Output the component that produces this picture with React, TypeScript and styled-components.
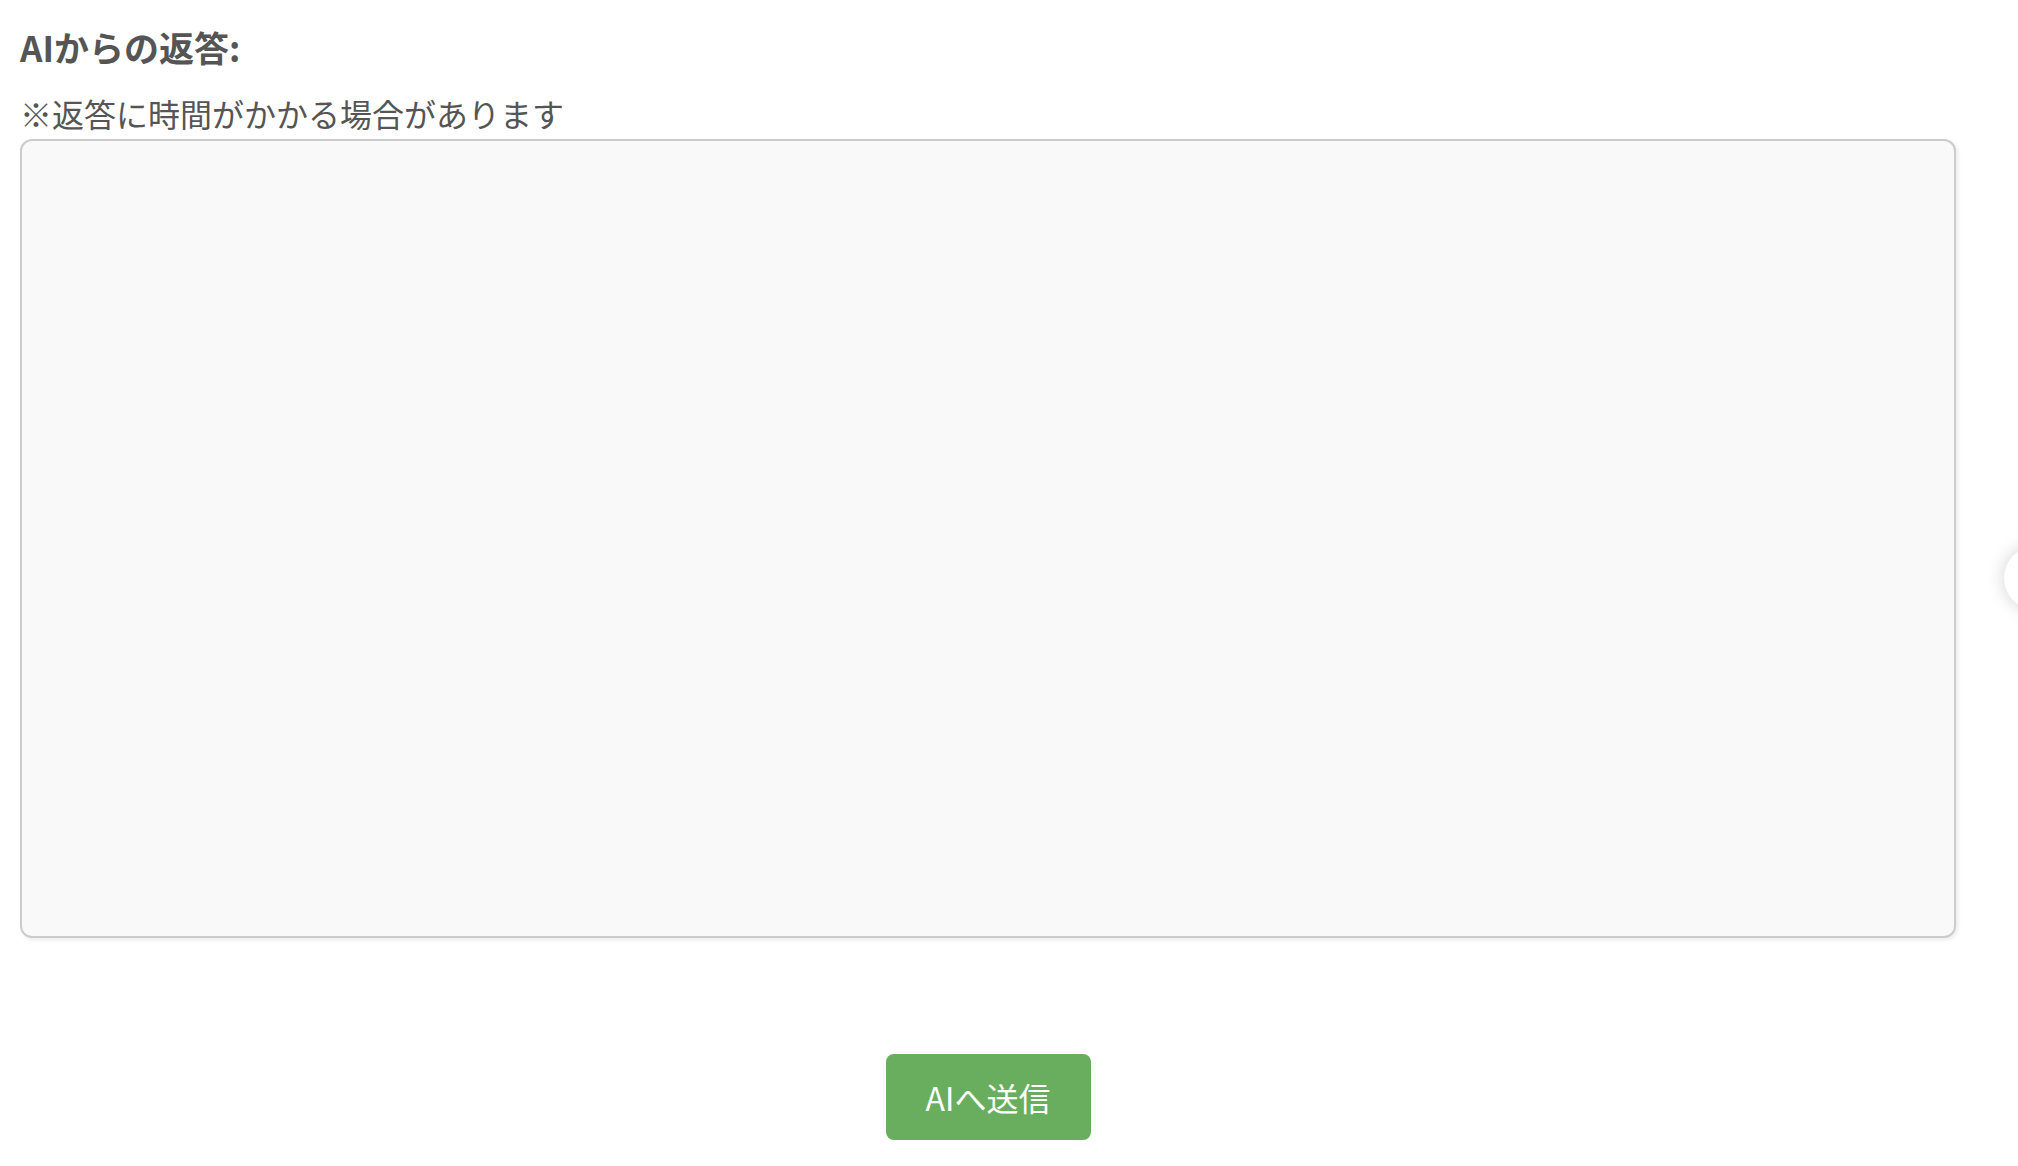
import React from 'react';
import styled, { createGlobalStyle } from 'styled-components';

const GlobalStyle = createGlobalStyle`
  html, body {
    margin: 0;
    padding: 0;
    background: #ffffff;
    font-family: "Noto Sans CJK JP", "Noto Sans", sans-serif;
    overflow: hidden;
  }
`;

const Page = styled.div`
  width: 1936px;
  padding: 23px 0 0 20px;
  display: flex;
  flex-direction: column;
`;

const Heading = styled.h3`
  margin: 0;
  font-size: 35px;
  line-height: 48px;
  font-weight: 700;
  color: #555555;
`;

const Note = styled.p`
  margin: 18px 0 2px;
  font-size: 32px;
  line-height: 48px;
  font-weight: 400;
  color: #555555;
`;

const Answer = styled.textarea`
  box-sizing: border-box;
  width: 100%;
  height: 799px;
  margin: 0;
  padding: 16px;
  border: 2px solid #cccccc;
  border-radius: 12px;
  background: #f9f9f9;
  box-shadow: 2px 2px 4px rgba(0, 0, 0, 0.08);
  font-family: inherit;
  font-size: 28px;
  color: #333333;
  resize: none;
  outline: none;
`;

const Actions = styled.div`
  display: flex;
  justify-content: center;
  padding-top: 116px;
`;

const SendButton = styled.button`
  width: 205px;
  height: 86px;
  border: none;
  border-radius: 8px;
  background: #69ae5e;
  color: #ffffff;
  font-family: inherit;
  font-size: 32px;
  font-weight: 400;
  cursor: pointer;
`;

const SideToggle = styled.div`
  position: fixed;
  top: 546px;
  right: -50px;
  width: 64px;
  height: 64px;
  border-radius: 50%;
  background: #ffffff;
  box-shadow: 0 0 18px rgba(0, 0, 0, 0.18);
`;

const App = () => {
  return (
    <>
      <GlobalStyle />
      <Page>
        <Heading>AIからの返答:</Heading>
        <Note>※返答に時間がかかる場合があります</Note>
        <Answer readOnly value='' />
        <Actions>
          <SendButton>AIへ送信</SendButton>
        </Actions>
      </Page>
      <SideToggle />
    </>
  );
};

export default App;
